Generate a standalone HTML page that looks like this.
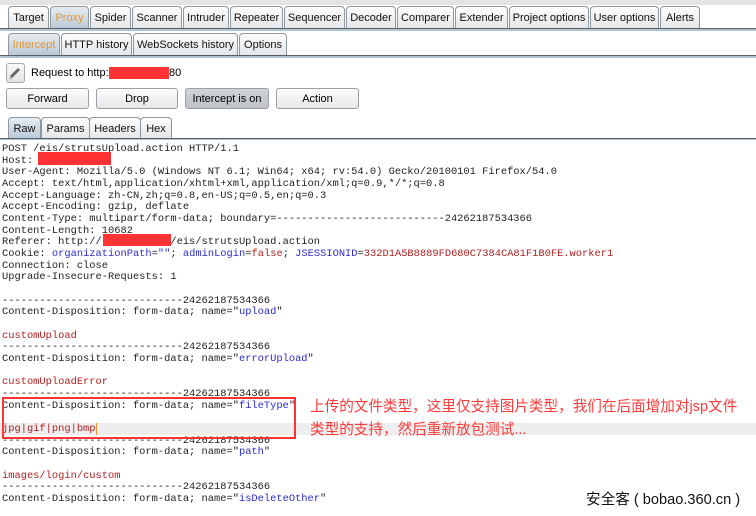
<!DOCTYPE html>
<html><head><meta charset="utf-8"><style>
*{margin:0;padding:0;box-sizing:border-box}
body{width:756px;height:516px;background:#fff;position:relative;overflow:hidden;font-family:"Liberation Sans",Arial,sans-serif;font-size:11px;color:#000}
.a{position:absolute}
.tab{position:absolute;height:22px;border:1px solid #8e969e;border-bottom:none;border-radius:4px 4px 0 0;background:linear-gradient(#fdfdfd,#e4e6e9);text-align:center;line-height:22px;font-size:11px;color:#111}
.sel{background:linear-gradient(#e6ecf1,#b9c9d6);color:#e8962f}
.btn{position:absolute;top:88px;height:21px;border:1px solid #9aa0a6;border-radius:3px;background:linear-gradient(#fcfcfc,#e6e7e9);text-align:center;line-height:20px;font-size:11px}
.line{position:absolute;left:0;width:756px}
pre{position:absolute;left:2px;top:144px;font-family:"Liberation Mono",monospace;font-size:10.4px;line-height:11.67px;color:#222}
.b{color:#2a2ad0}.r{color:#b02020}
.red{position:absolute;background:#ff3333}
.cn{position:absolute;font-family:"Liberation Sans","Noto Sans CJK SC",sans-serif;font-size:14.6px;color:#ff3a3a;line-height:23px;left:310px;top:396px;white-space:nowrap}
</style></head><body>
<div class="a" style="left:0;top:0;width:756px;height:5px;background:#e4e4e4"></div>
<div class="tab" style="left:8px;top:6px;width:41px">Target</div>
<div class="tab sel" style="left:50px;top:6px;width:39px">Proxy</div>
<div class="tab" style="left:90px;top:6px;width:41px">Spider</div>
<div class="tab" style="left:132px;top:6px;width:50px">Scanner</div>
<div class="tab" style="left:183px;top:6px;width:46px">Intruder</div>
<div class="tab" style="left:230px;top:6px;width:53px">Repeater</div>
<div class="tab" style="left:284px;top:6px;width:61px">Sequencer</div>
<div class="tab" style="left:346px;top:6px;width:50px">Decoder</div>
<div class="tab" style="left:397px;top:6px;width:57px">Comparer</div>
<div class="tab" style="left:455px;top:6px;width:53px">Extender</div>
<div class="tab" style="left:509px;top:6px;width:80px">Project options</div>
<div class="tab" style="left:590px;top:6px;width:69px">User options</div>
<div class="tab" style="left:660px;top:6px;width:40px">Alerts</div>
<div class="line" style="top:28px;height:3px;background:#b3c2cf;border-top:1px solid #55606a"></div>
<div class="tab sel" style="left:8px;top:33px;width:52px">Intercept</div>
<div class="tab" style="left:61px;top:33px;width:71px">HTTP history</div>
<div class="tab" style="left:133px;top:33px;width:105px">WebSockets history</div>
<div class="tab" style="left:239px;top:33px;width:48px">Options</div>
<div class="line" style="top:55px;height:3px;background:#b3c2cf;border-top:1px solid #55606a"></div>
<div class="a" style="left:6px;top:63px;width:19px;height:20px;border:1px solid #aaa;border-radius:3px;background:linear-gradient(#fafafa,#e2e2e2)">
<svg width="17" height="18"><path d="M4 13 L12 5" stroke="#666" stroke-width="3"/><path d="M3 15 L5 13" stroke="#999" stroke-width="1.5"/></svg></div>
<div class="a" style="left:31px;top:67px;font-size:11px">Request to http://</div>
<div class="red" style="left:109px;top:67px;width:60px;height:12px"></div>
<div class="a" style="left:169px;top:67px;font-size:11px">80</div>
<div class="btn" style="left:6px;width:83px">Forward</div>
<div class="btn" style="left:96px;width:82px">Drop</div>
<div class="btn" style="left:185px;width:84px;background:linear-gradient(#d2d4d7,#bfc2c6)">Intercept is on</div>
<div class="btn" style="left:276px;width:83px">Action</div>
<div class="tab sel" style="left:8px;top:117px;width:33px;color:#111">Raw</div>
<div class="tab" style="left:41px;top:117px;width:49px">Params</div>
<div class="tab" style="left:89px;top:117px;width:52px">Headers</div>
<div class="tab" style="left:140px;top:117px;width:32px">Hex</div>
<div class="line" style="top:138px;height:2px;background:#b3c2cf;border-top:1px solid #55606a"></div>
<div class="a" style="left:0;top:423px;width:756px;height:12px;background:#eeeeee"></div>
<pre>POST /eis/strutsUpload.action HTTP/1.1
Host: 
User-Agent: Mozilla/5.0 (Windows NT 6.1; Win64; x64; rv:54.0) Gecko/20100101 Firefox/54.0
Accept: text/html,application/xhtml+xml,application/xml;q=0.9,*/*;q=0.8
Accept-Language: zh-CN,zh;q=0.8,en-US;q=0.5,en;q=0.3
Accept-Encoding: gzip, deflate
Content-Type: multipart/form-data; boundary=---------------------------24262187534366
Content-Length: 10682
Referer: http://           /eis/strutsUpload.action
Cookie: <span class="b">organizationPath</span>=<span class="b">""</span>; <span class="b">adminLogin</span>=<span class="r">false</span>; <span class="b">JSESSIONID</span>=<span class="r">332D1A5B8889FD680C7384CA81F1B0FE.worker1</span>
Connection: close
Upgrade-Insecure-Requests: 1

-----------------------------24262187534366
Content-Disposition: form-data; name="<span class="b">upload</span>"

<span class="r">customUpload</span>
-----------------------------24262187534366
Content-Disposition: form-data; name="<span class="b">errorUpload</span>"

<span class="r">customUploadError</span>
-----------------------------24262187534366
Content-Disposition: form-data; name="<span class="b">fileType</span>"

<span class="r">jpg|gif|png|bmp</span><span style="border-left:1px solid #e8962f"></span>
-----------------------------24262187534366
Content-Disposition: form-data; name="<span class="b">path</span>"

<span class="r">images/login/custom</span>
-----------------------------24262187534366
Content-Disposition: form-data; name="<span class="b">isDeleteOther</span>"</pre>
<div class="red" style="left:38px;top:152px;width:73px;height:13px"></div>
<div class="red" style="left:103px;top:234px;width:68px;height:12px"></div>
<div class="a" style="left:2px;top:397px;width:294px;height:42px;border:2px solid #ff3333"></div>
<div class="cn">上传的文件类型，这里仅支持图片类型，我们在后面增加对jsp文件<br>类型的支持，然后重新放包测试...</div>
<div class="a" style="left:586px;top:488px;font-family:'Liberation Sans','Noto Sans CJK SC',sans-serif;font-size:14.6px;color:#111;white-space:nowrap">安全客 ( bobao.360.cn )</div>
</body></html>
